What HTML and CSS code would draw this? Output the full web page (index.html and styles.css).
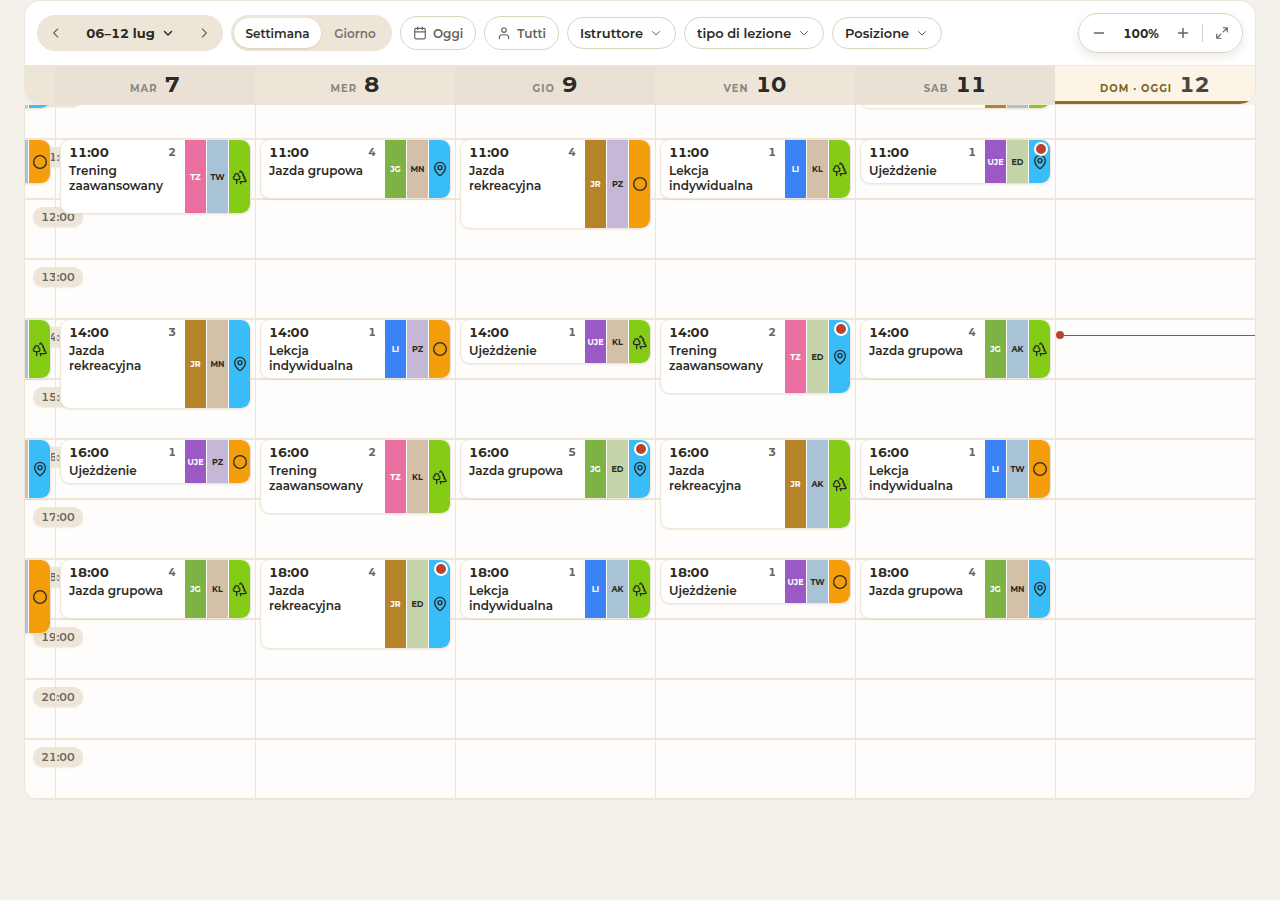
FILE: index.html
```html
<!DOCTYPE html>
<html lang="it">
<head>
  <meta charset="UTF-8" />
  <meta name="viewport" content="width=device-width, initial-scale=1.0"/>
  <title>Calendario</title>
  <link rel="stylesheet" href="styles.css">
</head>
<body>

  <svg class="sprite" aria-hidden="true">
    <symbol id="left" viewBox="0 0 24 24"><path d="M15 5l-7 7 7 7"/></symbol>
    <symbol id="right" viewBox="0 0 24 24"><path d="M9 5l7 7-7 7"/></symbol>
    <symbol id="down" viewBox="0 0 24 24"><path d="M5 9l7 7 7-7"/></symbol>
    <symbol id="calendar" viewBox="0 0 24 24"><rect x="3" y="4" width="18" height="18" rx="2"/><path d="M3 10h18M8 2v4M16 2v4"/></symbol>
    <symbol id="user" viewBox="0 0 24 24"><circle cx="12" cy="7" r="4"/><path d="M4 22v-2a5 5 0 0 1 5-5h6a5 5 0 0 1 5 5v2"/></symbol>
    <symbol id="minus" viewBox="0 0 24 24"><path d="M3 12h18"/></symbol>
    <symbol id="plus" viewBox="0 0 24 24"><path d="M3 12h18M12 3v18"/></symbol>
    <symbol id="expand" viewBox="0 0 24 24"><path d="M14 3h7v7M10 21H3v-7M21 3l-7 7M3 21l7-7"/></symbol>
    <symbol id="pin" viewBox="0 0 24 24"><path d="M20 10c0 5-5.500 10.200-7.400 11.800a1 1 0 0 1-1.200 0C9.500 20.200 4 15 4 10a8 8 0 0 1 16 0"/><circle cx="12" cy="10" r="3"/></symbol>
    <symbol id="circle" viewBox="0 0 24 24"><circle cx="12" cy="12" r="9.500"/></symbol>
    <symbol id="trees" viewBox="0 0 24 24"><path d="M10 10v.2A3 3 0 0 1 8.900 16H5a3 3 0 0 1-1-5.800V10a3 3 0 0 1 6 0Z"/><path d="M7 16v6M13 19v3M12 19h8.300a1 1 0 0 0 .7-1.700L18 14h.3a1 1 0 0 0 .7-1.700L16 9h.2a1 1 0 0 0 .8-1.700L13 3l-1.400 1.500"/></symbol>
  </svg>

  <main class="calendar">
    <header class="top">
      <div class="toolbar">
        <div class="range">
          <button class="arrow" aria-label="Precedente"><svg class="icon"><use href="#left"/></svg></button>
          <button class="dates">06–12 lug <svg class="icon small"><use href="#down"/></svg></button>
          <button class="arrow" aria-label="Successivo"><svg class="icon"><use href="#right"/></svg></button>
        </div>
        <div class="views">
          <button class="view active">Settimana</button>
          <button class="view">Giorno</button>
        </div>
        <button class="chip"><svg class="icon"><use href="#calendar"/></svg>Oggi</button>
        <button class="chip"><svg class="icon"><use href="#user"/></svg>Tutti</button>
        <div class="filter">
          <select aria-label="Istruttore"><option>Istruttore</option></select>
          <svg class="icon small"><use href="#down"/></svg>
        </div>
        <div class="filter">
          <select aria-label="tipo di lezione"><option>tipo di lezione</option></select>
          <svg class="icon small"><use href="#down"/></svg>
        </div>
        <div class="filter">
          <select aria-label="Posizione"><option>Posizione</option></select>
          <svg class="icon small"><use href="#down"/></svg>
        </div>
        <div class="zoom">
          <button aria-label="Riduci"><svg class="icon small"><use href="#minus"/></svg></button>
          <span class="percent">100%</span>
          <button aria-label="Ingrandisci"><svg class="icon small"><use href="#plus"/></svg></button>
          <span class="divider"></span>
          <button aria-label="Schermo intero"><svg class="icon"><use href="#expand"/></svg></button>
        </div>
      </div>
      <div class="days">
        <div class="day"></div>
        <div class="day odd"><span>MAR</span><b>7</b></div>
        <div class="day"><span>MER</span><b>8</b></div>
        <div class="day odd"><span>GIO</span><b>9</b></div>
        <div class="day"><span>VEN</span><b>10</b></div>
        <div class="day odd"><span>SAB</span><b>11</b></div>
        <div class="day today"><span>DOM · OGGI</span><b>12</b></div>
      </div>
    </header>
    <div class="body">
      <div class="grid" id="grid">
        <div class="hours" id="hours"></div>
      </div>
    </div>
  </main>

  <script src="script.js"></script>
</body>
</html>
```

FILE: styles.css
```css
* {
  box-sizing: border-box;
}

body {
  margin: 0;
  padding: 0 24px;
  background: #f4f1ea;
  color: #2b2a24;
  font-family: 'Montserrat', 'Inter', sans-serif;
  font-size: 13px;
  font-weight: 600;
  font-variant-numeric: tabular-nums;
}

button,
select {
  border: none;
  background: none;
  padding: 0;
  color: inherit;
  font: inherit;
  cursor: pointer;
}

.sprite {
  display: none;
}

.icon {
  width: 14px;
  height: 14px;
  flex: none;
  fill: none;
  stroke: currentColor;
  stroke-width: 2;
  stroke-linecap: round;
  stroke-linejoin: round;
}

.icon.small {
  width: 12px;
  height: 12px;
  stroke-width: 3;
}

/* toolbar */
.top {
  border: 1px solid #ede5d8;
  border-radius: 16px;
  overflow: hidden;
  background: #fff;
}

.toolbar {
  display: flex;
  align-items: center;
  gap: 8px;
  height: 64px;
  padding: 0 12px;
}

.toolbar button {
  display: flex;
  align-items: center;
  justify-content: center;
}

.range,
.views {
  display: flex;
  align-items: center;
  height: 36px;
  border-radius: 18px;
  background: #ede5d8;
}

.arrow {
  width: 38px;
  height: 36px;
  color: #66645b;
}

.dates {
  width: 110px;
  gap: 7px;
  font-weight: 700;
}

.views {
  padding: 3px;
}

.view {
  width: 68px;
  height: 30px;
  border-radius: 15px;
  color: #77746a;
  font-size: 12px;
}

.view.active {
  width: 87px;
  background: #fff;
  color: #2b2a24;
  box-shadow: 0 1px 2px rgba(60, 45, 20, 0.12);
}

.toolbar .chip {
  height: 34px;
  padding: 0 12px;
  gap: 6px;
  border: 1px solid #ddd3c2;
  border-radius: 17px;
  color: #66645b;
  font-size: 12px;
}

.filter {
  position: relative;
}

.filter select {
  appearance: none;
  height: 32px;
  padding: 0 31px 0 12px;
  border: 1px solid #ddd3c2;
  border-radius: 16px;
}

.filter .icon {
  position: absolute;
  top: 10px;
  right: 14px;
  color: #66645b;
  stroke-width: 2;
  pointer-events: none;
}

.zoom {
  display: flex;
  align-items: center;
  height: 40px;
  margin-left: auto;
  padding: 0 3px;
  border: 1px solid #ddd3c2;
  border-radius: 20px;
  color: #66645b;
  box-shadow: 0 4px 10px rgba(60, 45, 20, 0.1);
}

.zoom button {
  width: 34px;
  height: 34px;
}

.percent {
  width: 50px;
  color: #2b2a24;
  font-size: 12px;
  font-weight: 700;
  text-align: center;
}

.divider {
  width: 1px;
  height: 18px;
  margin: 0 2px;
  background: #ddd3c2;
}

/* day names */
.days,
.grid {
  display: grid;
  grid-template-columns: 30px repeat(6, 1fr);
}

.day {
  display: flex;
  align-items: baseline;
  justify-content: center;
  gap: 7px;
  height: 39px;
  padding-top: 6px;
  border-top: 1px solid #ede5d8;
  background: #ede5d8;
}

.day.odd {
  background: #e9e1d5;
}

.day span {
  color: #8a877e;
  font-size: 10px;
  font-weight: 700;
  letter-spacing: 1px;
}

.day b {
  font-size: 22px;
  font-weight: 700;
  line-height: 26px;
}

.day.today {
  border-bottom: 3px solid #94701c;
  background: #fcf5e7;
}

.day.today span {
  color: #7d6420;
}

.day.today b {
  color: #4a483a;
}

/* time grid, scrolled so that 10:00 is half under the header */
.body {
  height: 695px;
  overflow: hidden;
  border: 1px solid #ede5d8;
  border-top: none;
  border-radius: 0 0 14px 14px;
  background: #fffdfb;
}

.grid {
  position: relative;
  margin-top: -25px;
}

.hours {
  position: absolute;
  inset: 0;
}

.hour {
  height: 60px;
  padding: 7px 8px;
  border-bottom: 2px solid #ede5d8;
}

.hour span {
  display: block;
  width: 50px;
  height: 20px;
  border-radius: 10px;
  background: #ede5d8;
  color: #66645b;
  font-size: 11px;
  line-height: 20px;
  text-align: center;
  box-shadow: 0 1px 2px rgba(60, 45, 20, 0.08);
}

.column {
  position: relative;
  display: grid;
  grid-template-rows: repeat(48, 15px);
  border-left: 1px solid #ede5d8;
}

/* only the right end of monday is in view */
.column.monday {
  justify-content: end;
  overflow: hidden;
  border-left: none;
}

.monday .event {
  width: 191px;
}

.event {
  position: relative;
  display: flex;
  min-width: 0;
  margin: -1px 4px 1px;
  overflow: hidden;
  border: 1px solid #ede5d8;
  border-radius: 10px;
  background: #fff;
  box-shadow: 0 1px 2px rgba(60, 45, 20, 0.08);
}

.info {
  flex: 1;
  min-width: 0;
  padding: 5px 8px;
  line-height: 15px;
}

.row {
  display: flex;
  justify-content: space-between;
  margin-bottom: 3px;
  font-weight: 700;
}

.row small {
  color: #66645b;
  font-size: 11px;
}

.name {
  font-size: 12px;
}

.tag {
  display: flex;
  align-items: center;
  justify-content: center;
  width: 22px;
  border-left: 1px solid #fff;
  font-size: 8px;
  font-weight: 700;
}

.tag.light {
  color: #fff;
}

.tag .icon {
  width: 16px;
  height: 16px;
}

.alert {
  position: absolute;
  top: 2px;
  right: 2px;
  width: 14px;
  height: 14px;
  border: 2px solid #fff;
  border-radius: 50%;
  background: #b8432f;
}

.now {
  display: flex;
  align-items: center;
  height: 8px;
  margin-top: -4px;
}

.now::before {
  content: '';
  width: 8px;
  height: 8px;
  border-radius: 50%;
  background: #b8432f;
}

.now::after {
  content: '';
  flex: 1;
  height: 1px;
  background: #b8432f;
}
```

FILE: script.js
```js
const colors = {
  TZ: '#e86f9f', JG: '#7cb342', JR: '#b58329', LI: '#3b82f6', UJE: '#9b59c6',
  TW: '#a8c3d6', AK: '#a8c3d6', MN: '#d4bfa8', KL: '#d4bfa8', PZ: '#c5b8d6', ED: '#c5d3a8',
  pin: '#38bdf8', trees: '#84cc16', circle: '#f59e0b'
};

const names = {
  TZ: 'Trening zaawansowany',
  JG: 'Jazda grupowa',
  JR: 'Jazda rekreacyjna',
  LI: 'Lekcja indywidualna',
  UJE: 'Ujeżdżenie'
};

// hour, minutes, people, lesson, horse, place, alert
const week = [
  [[10, 30, 0, '', 'ED', 'pin'], [11, 45, 0, '', 'TW', 'circle'], [14, 60, 0, '', 'AK', 'trees'], [16, 60, 0, '', 'MN', 'pin'], [18, 75, 0, '', 'PZ', 'circle']],
  [[11, 75, 2, 'TZ', 'TW', 'trees'], [14, 90, 3, 'JR', 'MN', 'pin'], [16, 45, 1, 'UJE', 'PZ', 'circle'], [18, 60, 4, 'JG', 'KL', 'trees']],
  [[11, 60, 4, 'JG', 'MN', 'pin'], [14, 60, 1, 'LI', 'PZ', 'circle'], [16, 75, 2, 'TZ', 'KL', 'trees'], [18, 90, 4, 'JR', 'ED', 'pin', true]],
  [[11, 90, 4, 'JR', 'PZ', 'circle'], [14, 45, 1, 'UJE', 'KL', 'trees'], [16, 60, 5, 'JG', 'ED', 'pin', true], [18, 60, 1, 'LI', 'AK', 'trees']],
  [[11, 60, 1, 'LI', 'KL', 'trees'], [14, 75, 2, 'TZ', 'ED', 'pin', true], [16, 90, 3, 'JR', 'AK', 'trees'], [18, 45, 1, 'UJE', 'TW', 'circle']],
  [[10, 30, 0, 'JR', 'AK', 'trees'], [11, 45, 1, 'UJE', 'ED', 'pin', true], [14, 60, 4, 'JG', 'AK', 'trees'], [16, 60, 1, 'LI', 'TW', 'circle'], [18, 60, 4, 'JG', 'MN', 'pin']],
  []
];

const grid = document.getElementById('grid');
const hours = document.getElementById('hours');

// the 10:00 label is scrolled away, only its pill edge shows
for (let h = 10; h <= 21; h++) {
  hours.innerHTML += `<div class="hour"><span>${h === 10 ? '' : h + ':00'}</span></div>`;
}

function eventHtml([hour, minutes, people, lesson, horse, place, alert]) {
  const start = (hour - 10) * 4 + 1;
  const info = people
    ? `<div class="row"><span>${hour}:00</span><small>${people}</small></div><div class="name">${names[lesson]}</div>`
    : '';
  const lessonTag = lesson
    ? `<div class="tag light" style="background: ${colors[lesson]}">${people ? lesson : ''}</div>`
    : '';
  return `<article class="event" style="grid-row: ${start} / span ${minutes / 15}">
    <div class="info">${info}</div>
    ${lessonTag}
    <div class="tag" style="background: ${colors[horse]}; background-clip: padding-box">${people ? horse : ''}</div>
    <div class="tag" style="background: ${colors[place]}; background-clip: padding-box"><svg class="icon"><use href="#${place}"/></svg></div>
    ${alert ? '<i class="alert"></i>' : ''}
  </article>`;
}

week.forEach((events, i) => {
  let html = events.map(eventHtml).join('');
  if (i === 6) html = '<div class="now" style="grid-row: 18"></div>';
  grid.innerHTML += `<div class="column ${i === 0 ? 'monday' : ''}">${html}</div>`;
});
```
